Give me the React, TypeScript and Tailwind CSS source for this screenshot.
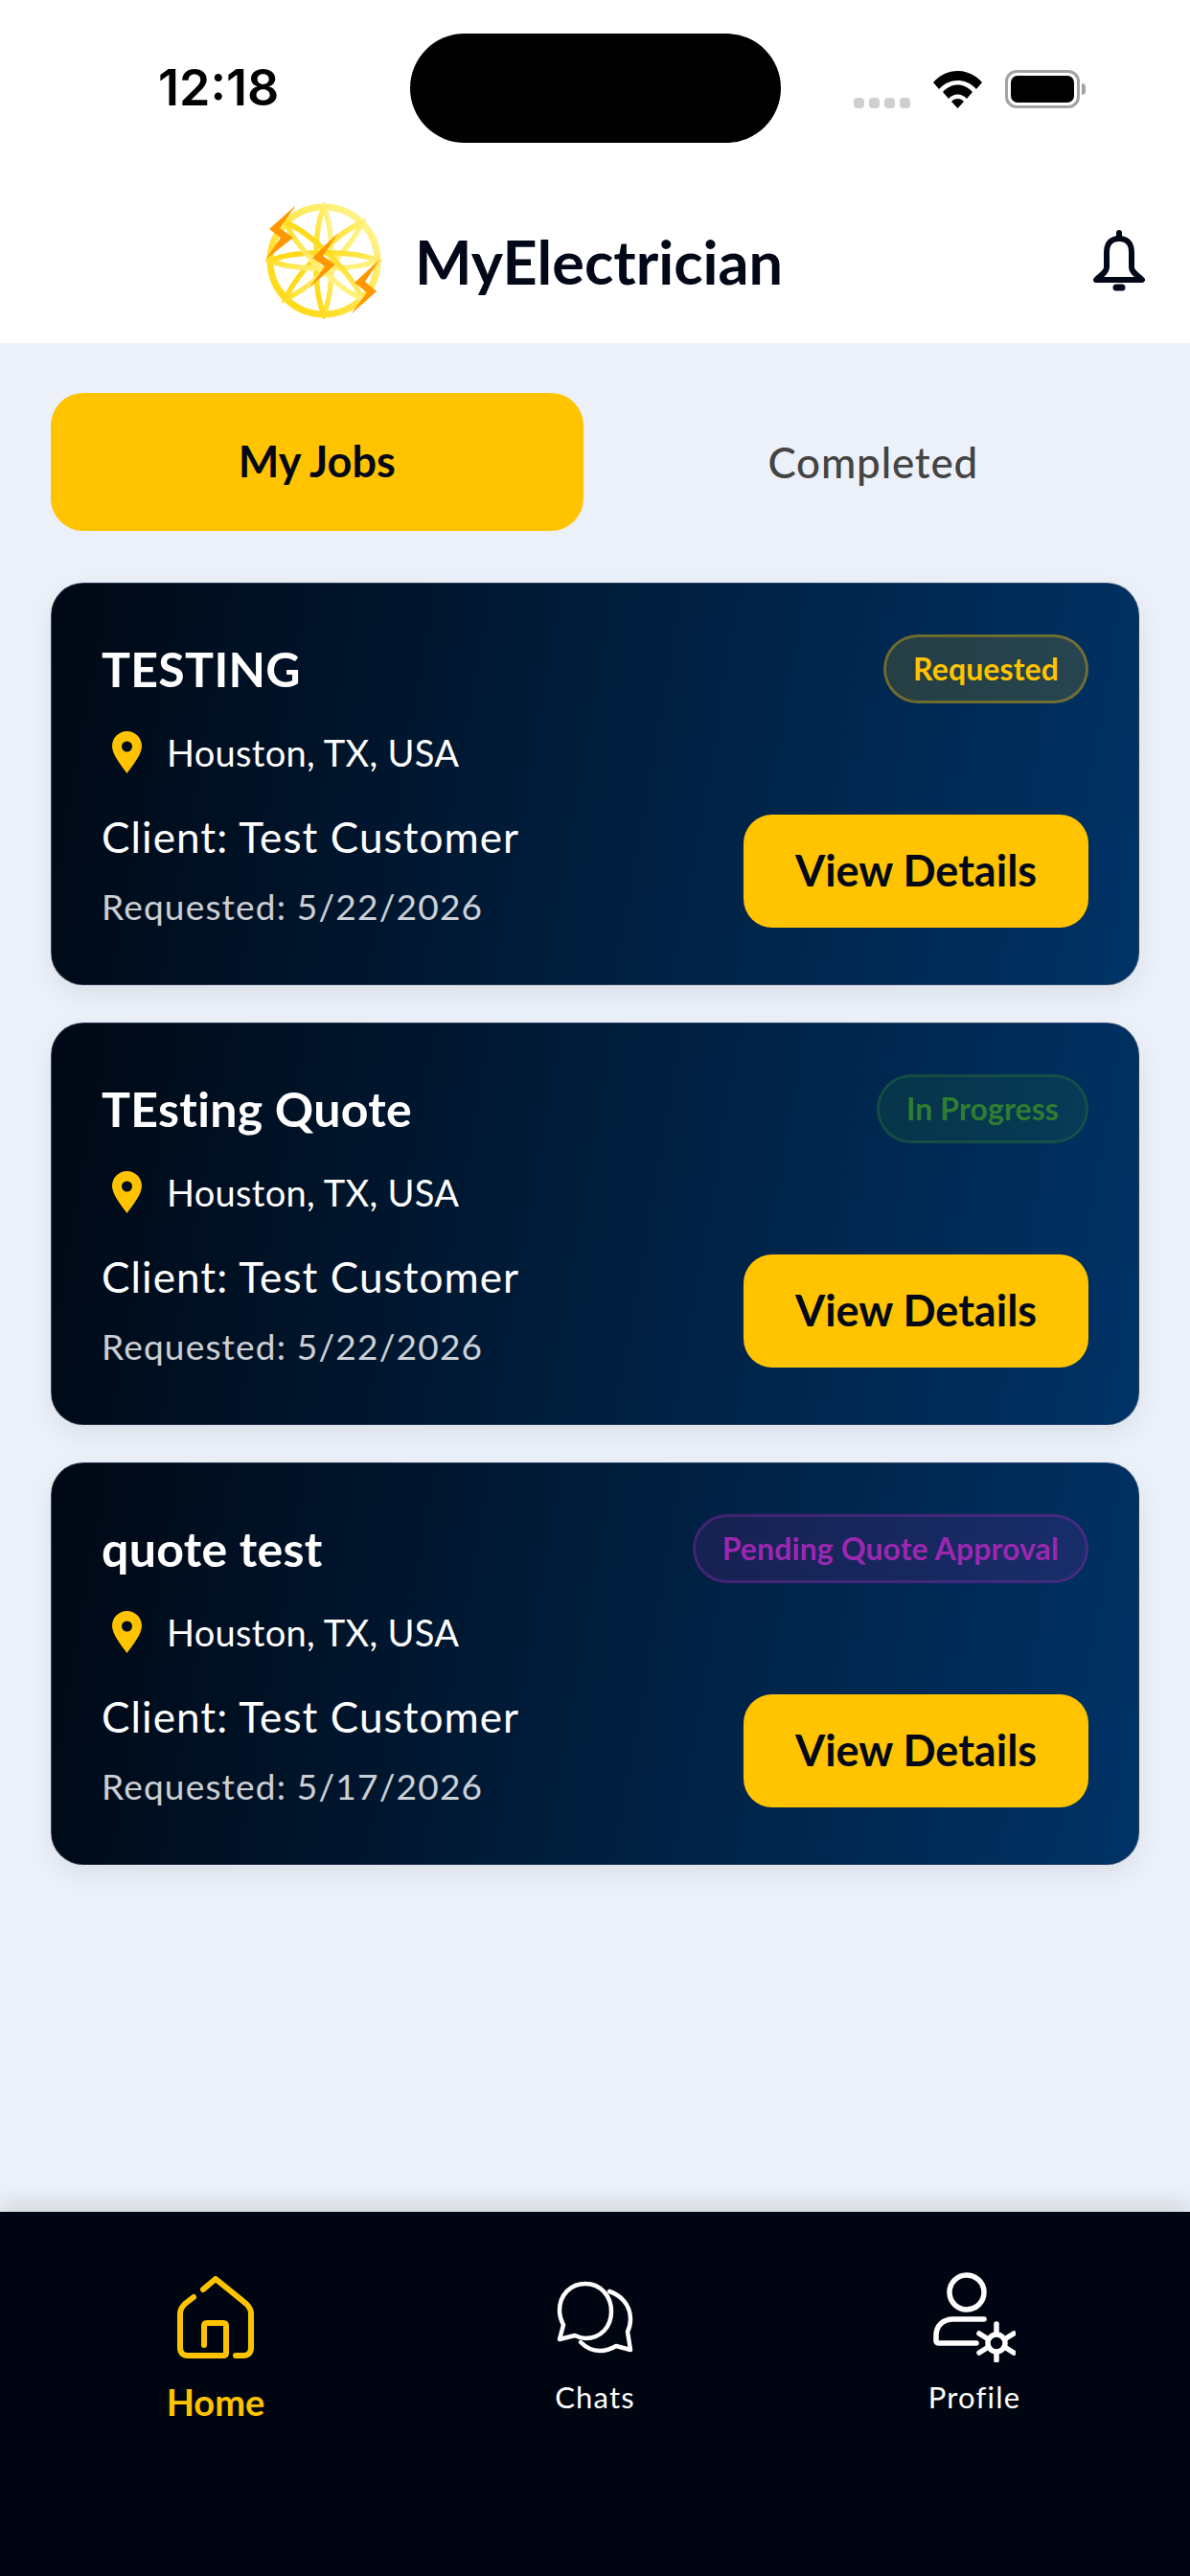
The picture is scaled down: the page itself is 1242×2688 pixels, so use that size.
import { ReactNode } from "react";

const jobs = [
  { title: "TESTING", date: "5/22/2026", status: "Requested", badge: "border-[#ffc30055] bg-[#ffc30026] text-[#ffc300]" },
  { title: "TEsting Quote", date: "5/22/2026", status: "In Progress", badge: "border-[#2e7d3255] bg-[#2e7d3226] text-[#2e7d32]" },
  { title: "quote test", date: "5/17/2026", status: "Pending Quote Approval", badge: "border-[#9c27b055] bg-[#9c27b026] text-[#9c27b0]" },
];

function Logo() {
  const petals = [0, 45, 90, 135];
  return (
    <svg viewBox="0 0 122 122" className="h-[122px] w-[122px]">
      <defs>
        <linearGradient id="ring" x1="0" y1="1" x2="1" y2="0">
          <stop offset="0" stopColor="#ffd500" />
          <stop offset="1" stopColor="#fff79a" />
        </linearGradient>
      </defs>
      <g stroke="url(#ring)" fill="none">
        <circle cx="61" cy="61" r="56" strokeWidth="7" />
        {petals.map((a) => (
          <g key={a} transform={`rotate(${a} 61 61)`}>
            <path d="M61 5 C 72 30 72 92 61 117 C 50 92 50 30 61 5Z" strokeWidth="5.500" />
          </g>
        ))}
      </g>
      <g fill="#ff9800">
        <path d="M32 3 4 28 16 37 0 60 29 37 15 27Z" />
        <path d="M76 32 49 58 62 67 45 90 73 65 60 56Z" />
        <path d="M120 59 93 84 106 94 89 117 116 93 104 83Z" />
      </g>
    </svg>
  );
}

function Bell() {
  return (
    <svg viewBox="0 0 56 64" className="h-16 w-14" fill="none" stroke="#020817" strokeWidth="6" strokeLinejoin="round" strokeLinecap="round">
      <path d="M15 23c0-9 5-14 13-14s13 5 13 14v16c0 5 6 8 11 13H4c5-5 11-8 11-13Z" />
      <path d="M28 3v5" />
      <path d="M25 60h6" strokeWidth="7" />
    </svg>
  );
}

function Wifi() {
  return (
    <svg viewBox="0 0 51 39" className="h-[39px] w-[51px]" fill="#000">
      <path d="M0 12C14-4 37-4 51 12l-6 7C34 7 17 7 6 19Z" />
      <path d="M10 22c9-10 22-10 31 0l-6 7c-5-6-14-6-19 0Z" />
      <path d="M19 32c3-4 10-4 13 0l-6.500 7Z" />
    </svg>
  );
}

function Battery() {
  return (
    <div className="flex items-center">
      <div className="flex h-10 w-[78px] items-center justify-center rounded-[12px] border-[3px] border-[#a3a3a3] p-[3px]">
        <div className="h-full w-full rounded-[7px] bg-black" />
      </div>
      <div className="ml-[2px] h-3 w-[4px] rounded-r-full bg-[#a3a3a3]" />
    </div>
  );
}

function Pin() {
  return (
    <svg viewBox="0 0 31 44" className="h-[44px] w-[31px] shrink-0">
      <path fillRule="evenodd" fill="#ffc300" d="M15.500 0C24 0 31 7 31 15.500 31 24 22 35 15.500 44 9 35 0 24 0 15.500 0 7 7 0 15.500 0Zm0 10.500a5.500 5.500 0 1 0 0 11 5.500 5.500 0 0 0 0-11Z" />
    </svg>
  );
}

function HomeIcon() {
  return (
    <svg viewBox="0 0 80 86" className="h-[86px] w-[80px]" fill="none" stroke="#ffc300" strokeWidth="6" strokeLinecap="round" strokeLinejoin="round">
      <path d="M27 14 40 3l32 26c3 3 5 6 5 10v36c0 5-3 8-8 8h-8" />
      <path d="M17 22 8 29c-3 3-5 6-5 10v36c0 5 3 8 8 8h37c2 0 3-1 3-3V52c0-2-1-3-3-3H31c-2 0-3 1-3 3v20" />
    </svg>
  );
}

function ChatIcon() {
  return (
    <svg viewBox="0 0 80 76" className="h-[76px] w-[80px]" fill="none" stroke="#fff" strokeWidth="4.500" strokeLinecap="round" strokeLinejoin="round">
      <path d="M30 3C15 3 3 14 3 31c0 6 2 11 4 15l-4 15 16-4c4 2 7 3 11 3 16 0 27-12 27-28S46 3 30 3Z" />
      <path d="M55 11c12 4 22 14 22 29 0 5-1 9-3 13l3 19-15-4c-5 3-10 5-17 5-8 0-14-3-20-9" />
    </svg>
  );
}

function ProfileIcon() {
  return (
    <svg viewBox="0 0 86 94" className="h-[94px] w-[86px]" fill="none" stroke="#fff" strokeWidth="5.500" strokeLinecap="round" strokeLinejoin="round">
      <circle cx="35" cy="21" r="18" />
      <path d="M53 49H21C10 49 3 56 3 66v6c0 1 1 2 2 2h40" />
      <circle cx="66" cy="74" r="9" />
      <path d="M66 54v9M66 85v7M48 64l8 5M76 79l8 5M48 84l8-5M76 69l8-5" />
    </svg>
  );
}

function Tab({ active, children }: { active?: boolean; children: ReactNode }) {
  return (
    <div className={active ? "flex h-[144px] flex-1 items-center justify-center rounded-[34px] bg-[#ffc300] text-[45px] font-bold text-[#020817]" : "flex h-[144px] flex-1 items-center justify-center text-[44px] tracking-[0.8px] text-[#444] font-medium"}>
      {children}
    </div>
  );
}

function NavItem({ icon, label, active }: { icon: ReactNode; label: string; active?: boolean }) {
  return (
    <div className="flex flex-1 flex-col items-center">
      <div className="flex h-[100px] items-center justify-center">{icon}</div>
      <span className={active ? "mt-[14px] text-[38px] leading-[48px] font-bold text-[#ffc300]" : "mt-[9px] text-[31px] leading-[48px] tracking-[1.2px] text-white"}>{label}</span>
    </div>
  );
}

export default function App() {
  return (
    <div className="flex h-[2688px] w-[1242px] flex-col overflow-hidden bg-[#ecf0f8] font-['Lato',sans-serif]">
      <div className="bg-white">
        <div className="flex h-[190px] items-start">
          <span className="mt-[60px] w-[428px] pl-[165px] font-['Inter',sans-serif] text-[52px] leading-[64px] font-semibold text-black">12:18</span>
          <div className="mt-[35px] h-[114px] w-[387px] rounded-full bg-black" />
          <div className="mt-[73px] flex items-end pl-[76px]">
            <div className="flex gap-[5px]">
              <span className="h-[11px] w-[11px] rounded-[4px] bg-[#cfcfcf]" />
              <span className="h-[11px] w-[11px] rounded-[4px] bg-[#cfcfcf]" />
              <span className="h-[11px] w-[11px] rounded-[4px] bg-[#cfcfcf]" />
              <span className="h-[11px] w-[11px] rounded-[4px] bg-[#cfcfcf]" />
            </div>
            <div className="ml-[24px]"><Wifi /></div>
            <div className="ml-[24px]"><Battery /></div>
          </div>
        </div>
        <div className="flex h-[168px] items-center pb-[4px]">
          <div className="ml-[277px]"><Logo /></div>
          <span className="ml-[34px] w-[387px] text-[63px] leading-none font-bold whitespace-nowrap text-[#020817]">MyElectrician</span>
          <div className="ml-[320px]"><Bell /></div>
        </div>
      </div>

      <div className="flex flex-1 flex-col px-[53px] pt-[52px]">
        <div className="flex gap-[25px]">
          <Tab active>My Jobs</Tab>
          <Tab>Completed</Tab>
        </div>
        <div className="mt-[54px] flex flex-col gap-[39px]">
          {jobs.map((job) => (
            <div key={job.title} className="flex h-[420px] flex-col rounded-[34px] border border-[#64748b66] bg-[linear-gradient(100deg,#000814,#003366)] px-[52px] pt-[52px] text-white shadow-[0_10px_28px_rgba(0,0,0,0.07)]">
              <div className="flex h-[74px] items-center justify-between">
                <span className="text-[50px] leading-none font-bold tracking-[0.3px]">{job.title}</span>
                <span className={`flex h-[72px] items-center rounded-full border-[3px] px-[28px] text-[32px] font-bold tracking-[0.1px] ${job.badge}`}>{job.status}</span>
              </div>
              <div className="mt-[26px] flex h-[48px] items-center pl-[11px]">
                <Pin />
                <span className="ml-[26px] text-[38px] tracking-[0.3px]">Houston, TX, USA</span>
              </div>
              <div className="flex items-start justify-between">
                <div className="flex flex-col">
                  <span className="mt-[37px] text-[44px] leading-[54px] tracking-[1.1px]">Client: Test Customer</span>
                  <span className="mt-[24px] text-[37px] leading-[44px] tracking-[1.2px] text-white/80">Requested: {job.date}</span>
                </div>
                <div className="mt-[41px] flex h-[118px] w-[360px] items-center justify-center rounded-[30px] bg-[#ffc300] text-[45px] font-bold text-[#020817]">View Details</div>
              </div>
            </div>
          ))}
        </div>
      </div>

      <div className="flex h-[380px] items-start bg-[#000611] px-[27px] pt-[60px] shadow-[0_-8px_24px_rgba(0,0,0,0.12)]">
        <NavItem active label="Home" icon={<HomeIcon />} />
        <NavItem label="Chats" icon={<ChatIcon />} />
        <NavItem label="Profile" icon={<ProfileIcon />} />
      </div>
    </div>
  );
}
